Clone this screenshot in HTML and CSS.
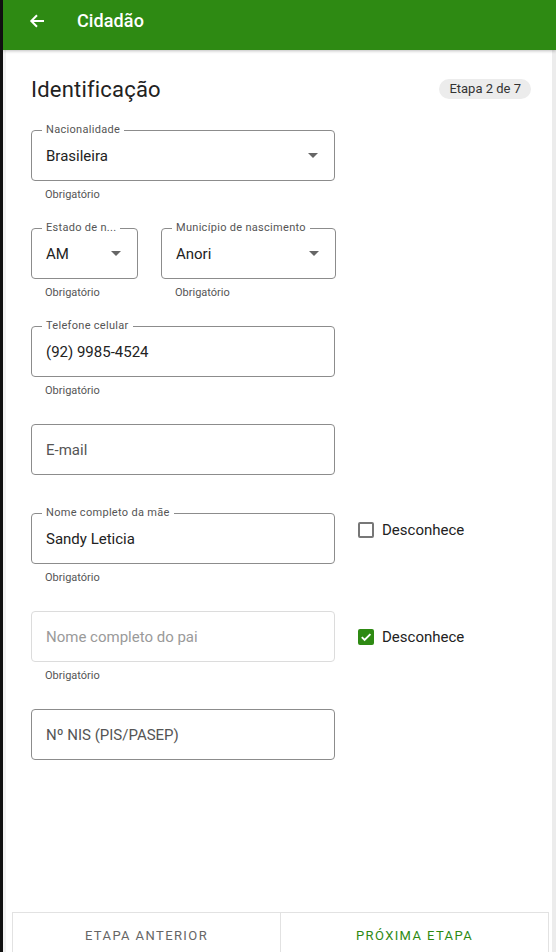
FILE: index.html
```html
<!DOCTYPE html>
<html lang="pt-BR">
<head>
<meta charset="utf-8">
<title>Cidadão</title>
<link rel="stylesheet" href="styles.css">
</head>
<body>
<div class="edge"></div>
<div class="app">
  <header class="topbar">
    <svg class="back" width="16" height="16" viewBox="0 0 16 16"><path d="M15 8H2.5M8 2.3 2.3 8 8 13.7" fill="none" stroke="#fff" stroke-width="2"/></svg>
    <span class="topbar-title">Cidadão</span>
  </header>
  <div class="main">
    <div class="content">
      <div class="title-row">
        <h1 class="title">Identificação</h1>
        <span class="badge">Etapa 2 de 7</span>
      </div>

      <div class="field">
        <div class="box w-full">
          <span class="label">Nacionalidade</span>
          <span class="value">Brasileira</span>
          <span class="caret"></span>
        </div>
        <div class="helper">Obrigatório</div>
      </div>

      <div class="field-row">
        <div class="field">
          <div class="box w-uf">
            <span class="label">Estado de n...</span>
            <span class="value">AM</span>
            <span class="caret"></span>
          </div>
          <div class="helper">Obrigatório</div>
        </div>
        <div class="field">
          <div class="box w-mun">
            <span class="label">Município de nascimento</span>
            <span class="value">Anori</span>
            <span class="caret"></span>
          </div>
          <div class="helper">Obrigatório</div>
        </div>
      </div>

      <div class="field">
        <div class="box w-full">
          <span class="label">Telefone celular</span>
          <span class="value">(92) 9985-4524</span>
        </div>
        <div class="helper">Obrigatório</div>
      </div>

      <div class="field field-short">
        <div class="box w-full">
          <span class="placeholder">E-mail</span>
        </div>
      </div>

      <div class="field-row">
        <div class="field">
          <div class="box w-full">
            <span class="label">Nome completo da mãe</span>
            <span class="value">Sandy Leticia</span>
          </div>
          <div class="helper">Obrigatório</div>
        </div>
        <label class="check">
          <span class="checkbox"></span>
          <span class="check-text">Desconhece</span>
        </label>
      </div>

      <div class="field-row">
        <div class="field">
          <div class="box w-full box-disabled">
            <span class="placeholder placeholder-disabled">Nome completo do pai</span>
          </div>
          <div class="helper">Obrigatório</div>
        </div>
        <label class="check check-mid">
          <span class="checkbox checkbox-on">
            <svg width="12" height="12" viewBox="0 0 12 12"><path d="M1.8 6.2 4.6 9 10.4 3.2" fill="none" stroke="#fff" stroke-width="1.9"/></svg>
          </span>
          <span class="check-text">Desconhece</span>
        </label>
      </div>

      <div class="field">
        <div class="box w-full">
          <span class="placeholder">Nº NIS (PIS/PASEP)</span>
        </div>
      </div>

      <div class="spacer"></div>

      <nav class="actions">
        <button class="action action-prev">ETAPA ANTERIOR</button>
        <button class="action action-next">PRÓXIMA ETAPA</button>
      </nav>
    </div>
    <div class="rail"></div>
  </div>
</div>
</body>
</html>
```

FILE: styles.css
```css
* { box-sizing: border-box; }

html, body {
  margin: 0;
  height: 952px;
  overflow: hidden;
}

body {
  display: flex;
  font-family: Roboto, "Noto Sans", Arial, sans-serif;
  color: #222;
  background: #fff;
}

.edge {
  width: 3px;
  background: #111;
  flex: none;
}

.app {
  flex: 1;
  display: flex;
  flex-direction: column;
  min-width: 0;
}

.topbar {
  height: 50px;
  flex: none;
  background: #2e8a13;
  display: flex;
  align-items: center;
  padding: 0 0 9px 26px;
  box-shadow: 0 1px 3px rgba(0,0,0,0.25);
  position: relative;
  z-index: 1;
}

.back { flex: none; }

.topbar-title {
  margin-left: 32px;
  color: #fff;
  font-size: 18px;
  font-weight: 500;
  letter-spacing: 0.1px;
}

.main {
  flex: 1;
  display: flex;
  min-height: 0;
}

.content {
  flex: 1;
  display: flex;
  flex-direction: column;
  border-left: 3px solid #f2f2f2;
  padding-left: 25px;
}

.rail {
  width: 4px;
  flex: none;
  background: #ececec;
}

.title-row {
  display: flex;
  align-items: center;
  justify-content: space-between;
  padding: 0 21px 0 0;
  height: 78px;
  margin-bottom: 2px;
}

.title {
  margin: 0;
  font-size: 22px;
  font-weight: 400;
  color: #222;
  letter-spacing: 0.2px;
}

.badge {
  background: #ececec;
  color: #333;
  font-size: 13px;
  height: 20px;
  line-height: 20px;
  padding: 0 10px;
  border-radius: 10px;
}

.field-row {
  display: flex;
  gap: 23px;
  align-items: flex-start;
}

.field {
  display: flex;
  flex-direction: column;
  height: 98px;
}

.field-short { height: 89px; }

.box {
  position: relative;
  height: 51px;
  border: 1px solid #8c8c8c;
  border-radius: 4px;
  display: flex;
  align-items: center;
  padding: 0 14px;
  flex: none;
}

.box-disabled { border-color: #dcdcdc; }

.w-full { width: 304px; }
.w-uf { width: 107px; }
.w-mun { width: 175px; }

.label {
  position: absolute;
  top: -8px;
  left: 10px;
  padding: 0 4px;
  background: #fff;
  font-size: 11px;
  line-height: 14px;
  color: #555;
  letter-spacing: 0.3px;
  white-space: nowrap;
}

.value {
  font-size: 15px;
  color: #222;
  flex: 1;
}

.placeholder {
  font-size: 15px;
  color: #555;
}

.placeholder-disabled { color: #9a9a9a; }

.caret {
  width: 0;
  height: 0;
  border-left: 5px solid transparent;
  border-right: 5px solid transparent;
  border-top: 5px solid #666;
  margin-right: 2px;
}

.helper {
  font-size: 11px;
  color: #555;
  padding-left: 14px;
  margin-top: 7px;
}

.check {
  display: flex;
  align-items: center;
  gap: 8px;
  margin-top: 9px;
  height: 16px;
}

.check-mid { margin-top: 18px; }

.checkbox {
  width: 16px;
  height: 16px;
  border: 2px solid #777;
  border-radius: 2px;
  display: flex;
  align-items: center;
  justify-content: center;
}

.checkbox-on {
  background: #2e8a13;
  border-color: #2e8a13;
}

.check-text {
  font-size: 15px;
  color: #222;
}

.spacer { flex: 1; }

.actions {
  flex: none;
  display: flex;
  height: 48px;
  margin: 0 3px -8px -19px;
  border: 1px solid #e2e2e2;
  border-bottom: none;
  background: #fff;
}

.action {
  flex: 1;
  border: none;
  background: none;
  font-family: Roboto, "Noto Sans", Arial, sans-serif;
  font-size: 13px;
  letter-spacing: 1.4px;
  padding: 0 0 3px;
}

.action-prev {
  color: #666;
  border-right: 1px solid #e2e2e2;
}

.action-next { color: #2e8a13; }
```
